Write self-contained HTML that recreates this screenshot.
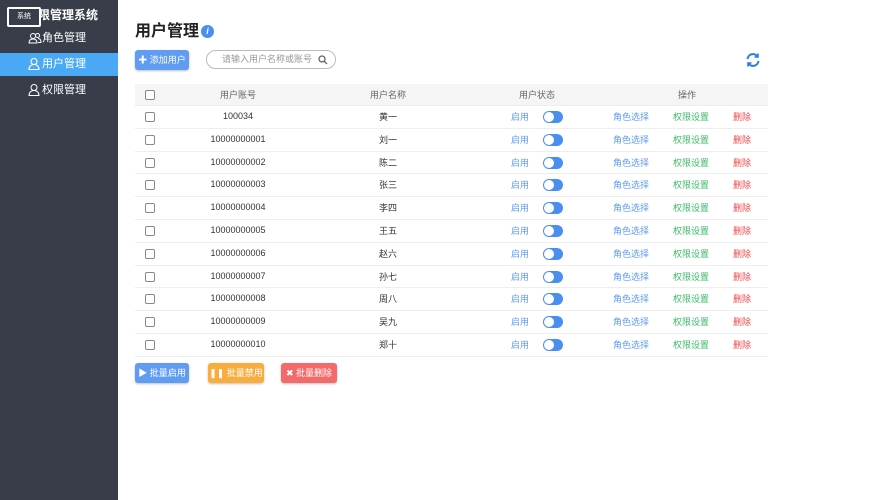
<!DOCTYPE html>
<html><head><meta charset="utf-8"><style>
*{margin:0;padding:0;box-sizing:border-box}
body{width:888px;height:500px;overflow:hidden;background:#fff;font-family:"Liberation Sans","Noto Sans CJK SC",sans-serif;position:relative}
.side{position:absolute;left:0;top:0;width:118px;height:500px;background:#383d49}
.title{position:absolute;left:26px;top:7px;color:#fff;font-size:12px;font-weight:bold;line-height:16px}
.logo{position:absolute;left:7px;top:7px;width:34px;height:20px;border:2px solid #fff;border-radius:2px;color:#fff;font-size:7px;line-height:16px;text-align:center;background:#383d49}
.mi{position:absolute;left:0;width:118px;height:23px;color:#fff;font-size:11px;line-height:23px;padding-left:28px}
.mi.act{background:#4aa9f4}
.mi svg{position:absolute;left:28px;top:5px}
.mi span{margin-left:14px}
h1{position:absolute;left:135px;top:21px;font-size:16px;font-weight:bold;color:#222;line-height:22px}
.info{position:absolute;left:201px;top:25px;width:13px;height:13px;border-radius:50%;background:#4a8ef0;color:#fff;font-size:9px;font-style:italic;font-weight:bold;text-align:center;line-height:13px}
.btn{position:absolute;height:20px;border-radius:3px;color:#fff;font-size:9px;line-height:20px;text-align:center;box-shadow:0 1px 2px rgba(0,0,0,.25)}
.search{position:absolute;left:206px;top:50px;width:130px;height:19px;border:1px solid #bbb;border-radius:10px;font-size:9px;color:#999;line-height:17px;padding-left:15px}
.row{position:absolute;left:135px;width:633px;height:22.8px;border-bottom:1px solid #eee;font-size:9px;color:#333}
.row>*{position:absolute;top:0;line-height:22px}
.cb{left:10px;top:6px!important;width:10px;height:10px;border:1px solid #888;border-radius:2px;background:#fff}
.c{transform:translateX(-50%);white-space:nowrap}
.tg{left:408px;top:5px!important;width:20px;height:12px;border-radius:6px;background:#4a8ef0}
.tg:after{content:"";position:absolute;left:1px;top:1px;width:10px;height:10px;border-radius:50%;background:#fff}
</style></head><body>
<div class="side">
<div class="title">权限管理系统</div>
<div class="logo">系统</div>
<div class="mi" style="top:27px"><svg width="14" height="12" viewBox="0 0 14 12" fill="none" stroke="#fff" stroke-width="1"><circle cx="5" cy="4" r="2.5"/><path d="M1 11c0-3 2-4 4-4s4 1 4 4z"/><circle cx="9.5" cy="3.5" r="2"/><path d="M10 6.5c2 0 3 1 3 4h-3"/></svg><span>角色管理</span></div>
<div class="mi act" style="top:53px"><svg width="12" height="12" viewBox="0 0 12 12" fill="none" stroke="#fff" stroke-width="1.1"><circle cx="6" cy="3.5" r="3"/><path d="M1 11.5c0-3 2-5 5-5s5 2 5 5z"/></svg><span>用户管理</span></div>
<div class="mi" style="top:79px"><svg width="12" height="12" viewBox="0 0 12 12" fill="none" stroke="#fff" stroke-width="1"><circle cx="6" cy="3.5" r="3"/><path d="M1 11.5c0-3 2-5 5-5s5 2 5 5z"/></svg><span>权限管理</span></div>
</div>
<h1>用户管理</h1><div class="info">i</div>
<div class="btn" style="left:135px;top:50px;width:54px;background:#5f9cf2">✚ 添加用户</div>
<div class="search">请输入用户名称或账号<svg style="position:absolute;right:7px;top:4px" width="10" height="10" viewBox="0 0 10 10" fill="none" stroke="#666" stroke-width="1.3"><circle cx="4" cy="4" r="3"/><path d="M6.2 6.2L9 9"/></svg></div>
<svg style="position:absolute;left:745px;top:52px" width="16" height="16" viewBox="0 0 16 16" fill="none" stroke="#2a7be8" stroke-width="2"><path d="M2.5 7a5.5 5.5 0 0 1 10-2.5"/><path d="M13.5 9a5.5 5.5 0 0 1-10 2.5"/><path d="M13 1.5v3.5h-3.5" stroke-width="1.6"/><path d="M3 14.5v-3.5h3.5" stroke-width="1.6"/></svg>
<div class="row" style="top:84px;height:22px;background:#f5f5f5;color:#666"><div class="cb"></div><div class="c" style="left:103px">用户账号</div><div class="c" style="left:253px">用户名称</div><div class="c" style="left:402px">用户状态</div><div class="c" style="left:552px">操作</div></div>
<div id="rows"></div>
<div class="btn" style="left:135px;top:363px;width:54px;background:#5f9cf2">▶ 批量启用</div>
<div class="btn" style="left:208px;top:363px;width:56px;background:#f9ad3f">❚❚ 批量禁用</div>
<div class="btn" style="left:281px;top:363px;width:56px;background:#f26a6a">✖ 批量删除</div>
<script>
var d=[["100034","黄一"],["10000000001","刘一"],["10000000002","陈二"],["10000000003","张三"],["10000000004","李四"],["10000000005","王五"],["10000000006","赵六"],["10000000007","孙七"],["10000000008","周八"],["10000000009","吴九"],["10000000010","郑十"]];
var h="";d.forEach(function(r,i){var t=106+i*22.8;h+='<div class="row" style="top:'+t+'px"><div class="cb"></div><div class="c" style="left:103px;top:-1px">'+r[0]+'</div><div class="c" style="left:253px">'+r[1]+'</div><div class="c" style="left:385px;color:#5f9cf2">启用</div><div class="tg"></div><div class="c" style="left:496px;color:#5f9cf2">角色选择</div><div class="c" style="left:556px;color:#3dbb6a">权限设置</div><div class="c" style="left:607px;color:#f04848">删除</div></div>'});
document.getElementById("rows").innerHTML=h;
</script>
</body></html>
